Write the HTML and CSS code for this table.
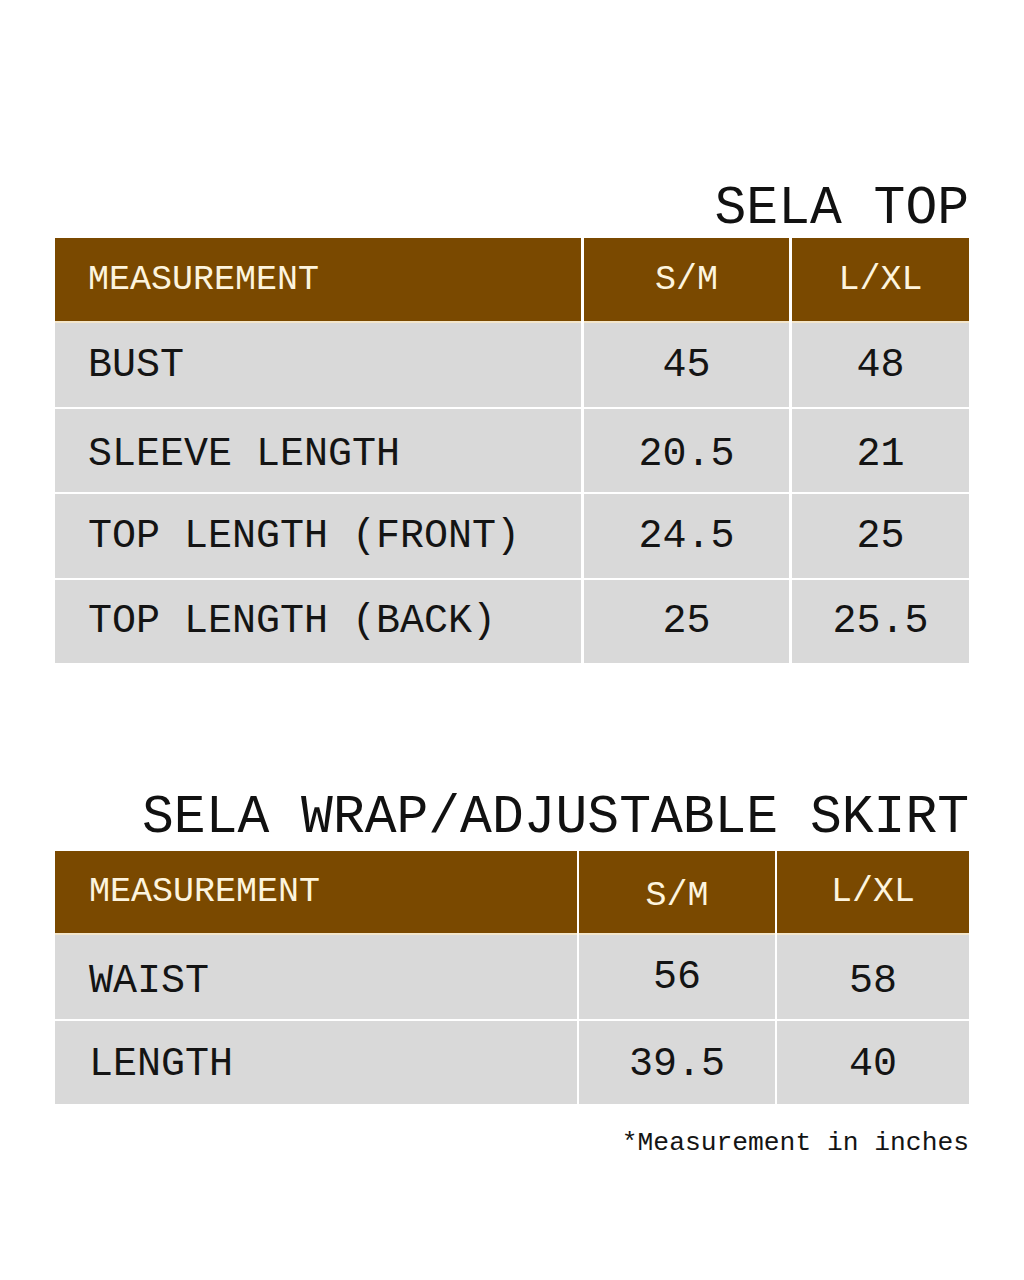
FILE: index.html
```html
<!DOCTYPE html>
<html>
<head>
<meta charset="utf-8">
<title>Sela Size Chart</title>
<link rel="stylesheet" href="styles.css">
</head>
<body>
<main class="page">
  <section class="chart chart-top">
    <h1 class="title title-top">SELA TOP</h1>
    <div class="table table-top">
      <div class="cell head first">MEASUREMENT</div>
      <div class="cell head">S/M</div>
      <div class="cell head">L/XL</div>

      <div class="cell first">BUST</div>
      <div class="cell num">45</div>
      <div class="cell num">48</div>

      <div class="cell first down">SLEEVE LENGTH</div>
      <div class="cell num down">20.5</div>
      <div class="cell num down">21</div>

      <div class="cell first">TOP LENGTH (FRONT)</div>
      <div class="cell num">24.5</div>
      <div class="cell num">25</div>

      <div class="cell first">TOP LENGTH (BACK)</div>
      <div class="cell num">25</div>
      <div class="cell num">25.5</div>
    </div>
  </section>

  <section class="chart chart-skirt">
    <h1 class="title title-skirt">SELA WRAP/ADJUSTABLE SKIRT</h1>
    <div class="table table-skirt">
      <div class="cell head first">MEASUREMENT</div>
      <div class="cell head low">S/M</div>
      <div class="cell head">L/XL</div>

      <div class="cell first down">WAIST</div>
      <div class="cell num">56</div>
      <div class="cell num down">58</div>

      <div class="cell first slight">LENGTH</div>
      <div class="cell num slight">39.5</div>
      <div class="cell num slight">40</div>
    </div>
    <p class="note">*Measurement in inches</p>
  </section>
</main>
</body>
</html>
```

FILE: styles.css
```css
html, body {
  margin: 0;
  padding: 0;
  background: #ffffff;
}

body {
  font-family: "Liberation Mono", "DejaVu Sans Mono", monospace;
  color: #141414;
}

.page {
  width: 914px;
  margin-left: 55px;
  padding-top: 183px;
  display: flex;
  flex-direction: column;
}

.title {
  margin: 0;
  font-weight: normal;
  font-size: 53px;
  line-height: 53px;
  text-align: right;
  color: #111111;
  white-space: nowrap;
}

.title-top {
  margin-bottom: 2px;
}

.chart-skirt {
  margin-top: 129px;
}

.title-skirt {
  margin-bottom: 6px;
}

.table {
  display: grid;
  background: #ffffff;
}

.table-top {
  grid-template-columns: 526px 205px 177px;
  grid-template-rows: 83px 84px 83px 84px 83px;
  column-gap: 3px;
  row-gap: 2px;
}

.table-skirt {
  grid-template-columns: 522px 196px 192px;
  grid-template-rows: 82px 84px 83px;
  column-gap: 2px;
  row-gap: 2px;
}

.cell {
  background: #d9d9d9;
  display: flex;
  align-items: center;
  justify-content: center;
  font-size: 40px;
  color: #141414;
  white-space: nowrap;
}

.cell.first {
  justify-content: flex-start;
  padding-left: 33px;
}

.cell.head {
  background: #7a4900;
  color: #fdf4de;
  font-size: 35px;
  box-shadow: 0 2px 0 #f3e6cc;
}

.table-skirt .cell.first {
  padding-left: 34px;
}

.cell.down {
  padding-top: 8px;
}

.cell.slight {
  padding-top: 4px;
}

.cell.low {
  padding-top: 8px;
}

.note {
  margin: 26px 0 0 0;
  font-size: 26.3px;
  line-height: 26px;
  text-align: right;
  color: #141414;
}
```
